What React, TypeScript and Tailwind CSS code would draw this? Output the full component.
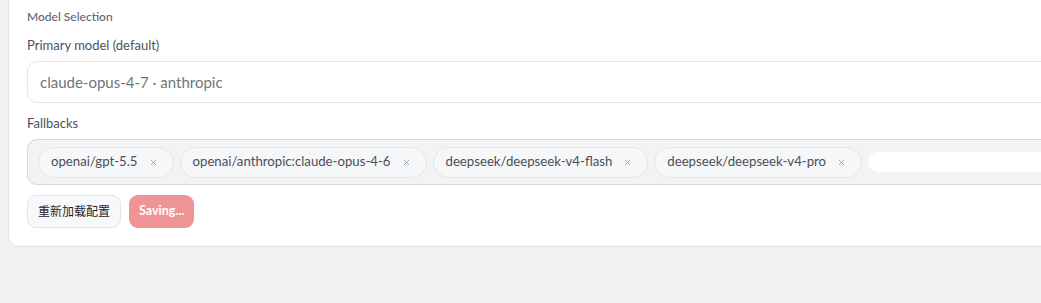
import { X } from "lucide-react";

const fallbacks = [
  "openai/gpt-5.5",
  "openai/anthropic:claude-opus-4-6",
  "deepseek/deepseek-v4-flash",
  "deepseek/deepseek-v4-pro",
];

function Chip({ label }: { label: string }) {
  return (
    <span className="inline-flex h-[31px] shrink-0 items-center gap-[11px] rounded-full border border-[#e4e6ea] bg-[#f6f7f9] pl-[12px] pr-[15px] text-[13.2px] text-[#4a4f58]">
      {label}
      <X className="h-[9px] w-[9px] text-[#9ca3af]" strokeWidth={2.5} />
    </span>
  );
}

export default function App() {
  return (
    <div className="h-[303px] w-[1041px] overflow-hidden bg-[#f1f2f4] font-['Lato','Noto_Sans_CJK_SC',sans-serif]">
      <section className="ml-[8px] -mt-[12px] w-[1100px] rounded-xl border border-[#e2e4e8] bg-white pb-[18px] pl-[18px] pt-[20px]">
        <h2 className="text-[12px] font-medium leading-[16px] text-[#5f6672]">Model Selection</h2>

        <label className="mt-[11px] block text-[13px] leading-[18px] text-[#4b515b]">Primary model (default)</label>
        <div className="mt-[7px] flex h-[42px] items-center rounded-[10px] border border-[#e6e8eb] bg-white px-[12px] text-[15px] text-[#70757d]">
          claude-opus-4-7 · anthropic
        </div>

        <label className="mt-[11px] block text-[13px] leading-[18px] text-[#4b515b]">Fallbacks</label>
        <div className="mt-[7px] flex h-[46px] items-center gap-[6px] rounded-[10px] border border-[#d6d9de] bg-[#f2f3f5] px-[10px]">
          {fallbacks.map((f) => (
            <Chip key={f} label={f} />
          ))}
          <input className="h-[20px] flex-1 rounded-full bg-white outline-none" />
        </div>

        <div className="mt-[10px] flex gap-[8px]">
          <button className="h-[33px] rounded-[9px] border border-[#e1e3e7] bg-[#f7f8fa] px-[10px] text-[12px] text-[#1f2328]">
            重新加载配置
          </button>
          <button className="h-[33px] rounded-[9px] bg-[#ee9494] px-[10px] text-[12.5px] font-bold text-white">
            Saving...
          </button>
        </div>
      </section>
    </div>
  );
}
